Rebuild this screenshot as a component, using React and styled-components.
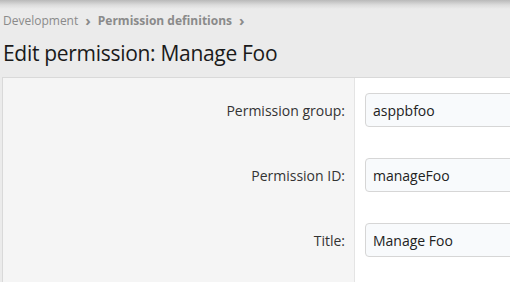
import React from 'react';
import styled, { createGlobalStyle } from 'styled-components';

const colors = {
  page: '#ebebeb',
  muted: '#8a8a8a',
  text: '#1a1a1a',
  label: '#333333',
  labelBg: '#f5f5f5',
  border: '#d9d9d9',
  inputBg: '#f8fafc',
};

const GlobalStyle = createGlobalStyle`
  html, body {
    margin: 0;
    padding: 0;
    background: ${colors.page};
    font-family: "Open Sans", "Noto Sans", sans-serif;
    overflow: hidden;
  }
`;

const Page = styled.div`
  display: flex;
  flex-direction: column;
  width: 510px;
  height: 282px;
  overflow: hidden;
  background: linear-gradient(to bottom, #b9b9b9 0px, #dcdcdc 5px, ${colors.page} 9px);
`;

const Crumbs = styled.nav`
  display: flex;
  align-items: center;
  gap: 7px;
  padding: 12px 0 0 3px;
  font-size: 12px;
  line-height: 17px;
  color: ${colors.muted};
`;

const Crumb = styled.span`
  font-weight: ${p => (p.$strong ? 700 : 400)};
`;

const Chevron = styled.span`
  font-size: 15px;
  font-weight: 700;
  line-height: 17px;
`;

const Title = styled.h1`
  margin: 0;
  padding: 9px 0 0 3px;
  font-size: 21px;
  line-height: 30px;
  font-weight: 400;
  letter-spacing: -0.3px;
  color: ${colors.text};
`;

const Panel = styled.section`
  flex: 1;
  display: flex;
  flex-direction: column;
  margin: 9px 0 0 2px;
  width: 700px;
  border-top: 1px solid ${colors.border};
  border-left: 1px solid ${colors.border};
  background: #fff;
`;

const Row = styled.div`
  display: grid;
  grid-template-columns: 351px 1fr;
  flex: ${p => (p.$grow ? 1 : 'none')};
`;

const Label = styled.label`
  display: flex;
  align-items: center;
  justify-content: flex-end;
  padding-right: 9px;
  background: ${colors.labelBg};
  font-size: 14px;
  color: ${colors.label};
`;

const Field = styled.div`
  padding: ${p => (p.$empty ? '0' : '15px 0 16px 10px')};
  border-left: 1px solid #e4e4e4;
`;

const Input = styled.input`
  box-sizing: border-box;
  width: 300px;
  height: 34px;
  padding: 0 7px;
  border: 1px solid #d6d6d6;
  border-radius: 4px;
  background: ${colors.inputBg};
  font-family: inherit;
  font-size: 14px;
  color: #222;
  outline: none;
`;

const fields = [
  { id: 'group', label: 'Permission group:', value: 'asppbfoo' },
  { id: 'pid', label: 'Permission ID:', value: 'manageFoo' },
  { id: 'title', label: 'Title:', value: 'Manage Foo' },
];

export default function App() {
  return (
    <Page>
      <GlobalStyle />
      <Crumbs>
        <Crumb>Development</Crumb>
        <Chevron>›</Chevron>
        <Crumb $strong>Permission definitions</Crumb>
        <Chevron>›</Chevron>
      </Crumbs>
      <Title>Edit permission: Manage Foo</Title>
      <Panel>
        {fields.map(f => (
          <Row key={f.id}>
            <Label htmlFor={f.id}>{f.label}</Label>
            <Field>
              <Input id={f.id} defaultValue={f.value} />
            </Field>
          </Row>
        ))}
        <Row $grow>
          <Label as="div" />
          <Field $empty />
        </Row>
      </Panel>
    </Page>
  );
}
